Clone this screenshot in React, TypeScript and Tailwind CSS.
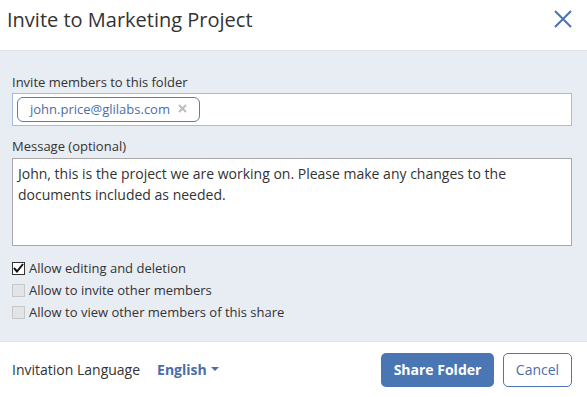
import { useState } from 'react';

const App = () => {
  const [editing, setEditing] = useState(true)
  const [message, setMessage] = useState(
    'John, this is the project we are working on. Please make any changes to the documents included as needed.'
  )

  return (
    <div className="w-[587px] h-[397px] bg-white text-[#333] overflow-hidden" style={{ fontFamily: '"Open Sans", sans-serif' }}>
      {/* Header */}
      <div className="h-[51px] flex items-start justify-between pl-[7px] pr-[15px] pt-[8px] border-b border-[#dfe3ea]">
        <h2 className="text-[20px] leading-[24px] text-[#333]">Invite to Marketing Project</h2>
        <button className="text-[#4a72b2] mt-[2px]">
          <svg width="18" height="18" viewBox="0 0 18 18" fill="none" stroke="currentColor" strokeWidth="2">
            <path d="M1 1L17 17M17 1L1 17" />
          </svg>
        </button>
      </div>

      {/* Body */}
      <div className="bg-[#e8ecf3] h-[290px] pl-3 pr-[15px] pt-[22px]">
        <label className="block text-[13px] leading-[18px] mb-[2px]">Invite members to this folder</label>
        <div className="h-[33px] bg-white border border-[#a5bcdf] flex items-center px-1">
          <span className="h-[25px] w-[183px] flex items-center gap-[8px] border border-[#5a7db5] rounded-[6px] pl-[12px] text-[13px] text-[#4a6ea8]">
            john.price@glilabs.com
            <svg width="9" height="9" viewBox="0 0 9 9" className="mb-[3px]">
              <path d="M1 1L8 8M8 1L1 8" stroke="#bdbdbd" strokeWidth="2" />
            </svg>
          </span>
        </div>

        <label className="block text-[13px] leading-[18px] mt-[11px] mb-[3px]">Message (optional)</label>
        <textarea
          className="block w-full h-[88px] bg-white border border-[#a9a9a9] px-[5px] pt-[4px] text-[14px] leading-[21px] text-[#333] resize-none outline-none"
          value={message}
          onChange={(e) => setMessage(e.target.value)}
        />

        <div className="mt-[15px] flex flex-col gap-[8px] text-[13px] leading-[14px]">
          <label className="flex items-center gap-[4px]">
            <span
              onClick={() => setEditing(!editing)}
              className="w-[13px] h-[13px] border border-[#333] bg-white flex items-center justify-center"
            >
              {editing && (
                <svg width="11" height="10" viewBox="0 0 11 10">
                  <path d="M1 5L4 8.5L10 1" stroke="#111" strokeWidth="2" fill="none" />
                </svg>
              )}
            </span>
            Allow editing and deletion
          </label>
          <label className="flex items-center gap-[4px]">
            <span className="w-[13px] h-[13px] border border-[#c8c8c8] bg-[#e2e4e8]" />
            Allow to invite other members
          </label>
          <label className="flex items-center gap-[4px]">
            <span className="w-[13px] h-[13px] border border-[#c8c8c8] bg-[#e2e4e8]" />
            Allow to view other members of this share
          </label>
        </div>
      </div>

      {/* Footer */}
      <div className="border-t border-[#dfe3ea] h-[56px] flex items-center pl-3 pr-[15px]">
        <span className="text-[14px] text-[#333]">Invitation Language</span>
        <button className="ml-[17px] flex items-center gap-[4px] text-[14px] font-bold text-[#4a6ea8]">
          English
          <svg width="8" height="5" viewBox="0 0 8 5"><path d="M0 0H8L4 4Z" fill="#4a6ea8" /></svg>
        </button>
        <button className="ml-auto h-[34px] w-[113px] rounded-[5px] bg-[#4a76b4] text-white text-[14px] font-bold">
          Share Folder
        </button>
        <button className="ml-[9px] h-[34px] w-[69px] rounded-[5px] border border-[#4a76b4] bg-white text-[#4a6ea8] text-[14px]">
          Cancel
        </button>
      </div>
    </div>
  );
};

export default App;
